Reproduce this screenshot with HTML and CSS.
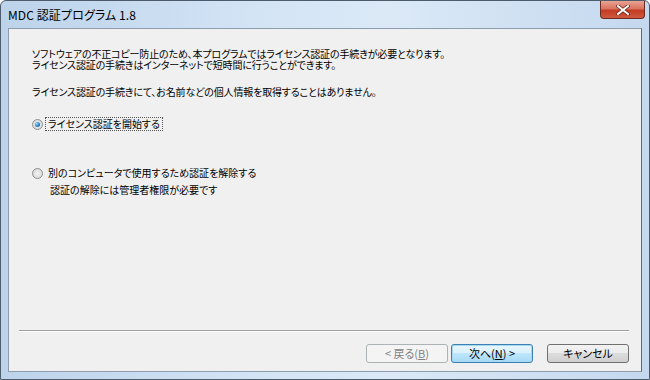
FILE: index.html
```html
<!DOCTYPE html>
<html lang="ja">
<head>
  <meta charset="UTF-8">
  <title>MDC 認証プログラム 1.8</title>
  <link rel="stylesheet" href="styles.css">
</head>
<body>
  <div class="window">
    <div class="titlebar">
      <span class="title">MDC 認証プログラム 1.8</span>
      <div class="close-btn">
        <svg width="14" height="10" viewBox="0 0 14 10">
          <path d="M2 1 L12 9 M12 1 L2 9" stroke="#5a1a10" stroke-width="3.4" stroke-linecap="square"/>
          <path d="M2 1 L12 9 M12 1 L2 9" stroke="#fff" stroke-width="2" stroke-linecap="square"/>
        </svg>
      </div>
    </div>

    <div class="client">
      <div class="content">
        <p class="intro">ソフトウェアの不正コピー防止のため、本プログラムではライセンス認証の手続きが必要となります。<br>ライセンス認証の手続きはインターネットで短時間に行うことができます。</p>
        <p class="intro last">ライセンス認証の手続きにて、お名前などの個人情報を取得することはありません。</p>

        <div class="option first">
          <span class="radio checked"></span>
          <span class="label focus">ライセンス認証を開始する</span>
        </div>

        <div class="option second">
          <span class="radio"></span>
          <span class="label">別のコンピュータで使用するため認証を解除する</span>
        </div>
        <p class="note">認証の解除には管理者権限が必要です</p>
      </div>

      <div class="separator"></div>

      <div class="buttons">
        <button class="btn disabled" disabled>&lt; 戻る(<u>B</u>)</button>
        <button class="btn default">次へ(<u>N</u>) &gt;</button>
        <button class="btn cancel">キャンセル</button>
      </div>
    </div>
  </div>
</body>
</html>
```

FILE: styles.css
```css
body {
  margin: 0;
  padding: 0;
  font-family: "Noto Sans CJK JP", "Liberation Sans", sans-serif;
  font-feature-settings: "palt";
  color: #000;
  background: #fff;
}

.window {
  width: 650px;
  height: 380px;
  box-sizing: border-box;
  border: 1px solid #4d5c6c;
  border-radius: 6px 6px 0 0;
  background: linear-gradient(to right, #bdd3ea 0%, #d3e4f5 40%, #dbe9f7 60%, #c4d8ee 100%);
  padding: 0 7px 7px 7px;
  display: flex;
  flex-direction: column;
}

.titlebar {
  height: 27px;
  display: flex;
  align-items: flex-start;
  justify-content: space-between;
  flex-shrink: 0;
}

.title {
  font-size: 12px;
  line-height: 12px;
  margin-top: 8px;
  color: #000;
  letter-spacing: 0.1px;
}

.close-btn {
  width: 45px;
  height: 18px;
  margin-right: -3px;
  box-sizing: border-box;
  border: 1px solid #6b2b22;
  border-top: none;
  border-radius: 0 0 4px 4px;
  background: linear-gradient(to bottom, #e8a394 0%, #d9745f 45%, #c23b22 55%, #cf5a3e 100%);
  display: flex;
  align-items: center;
  justify-content: center;
}

.client {
  flex: 1;
  background: #f0f0f0;
  border: 1px solid #8c9cad;
  border-right-color: #5f6b78;
  display: flex;
  flex-direction: column;
}

.content {
  flex: 1;
  padding: 19px 0 0 23px;
  font-size: 10px;
}

.intro {
  margin: 0 0 16px 0;
  line-height: 11px;
  letter-spacing: -0.15px;
}

.intro.last {
  margin-bottom: 0;
}

.option {
  display: flex;
  align-items: center;
}

.option.first {
  margin-top: 20px;
}

.option.second {
  margin-top: 35px;
}

.radio {
  width: 11px;
  height: 11px;
  box-sizing: border-box;
  border-radius: 50%;
  border: 1px solid #8f8f8f;
  background: radial-gradient(circle, #f4f4f4 0%, #dcdcdc 70%, #cfcfcf 100%);
  display: inline-flex;
  align-items: center;
  justify-content: center;
  margin-right: 2px;
}

.radio.checked::after {
  content: "";
  width: 5px;
  height: 5px;
  border-radius: 50%;
  background: radial-gradient(circle at 35% 35%, #a9e3ff 0%, #2e8fd3 45%, #0d4f8e 100%);
}

.label {
  padding: 0 2px;
  line-height: 12px;
  border: 1px dotted transparent;
}

.label.focus {
  border-color: #555;
}

.note {
  margin: 4px 0 0 18px;
  line-height: 12px;
}

.separator {
  margin: 0 12px 0 10px;
  border-top: 1px solid #a0a0a0;
  border-bottom: 1px solid #fff;
}

.buttons {
  display: flex;
  justify-content: flex-end;
  gap: 3px;
  padding: 12px 12px 8px 0;
}

.btn {
  width: 82px;
  height: 19px;
  padding: 0;
  font-family: "Noto Sans CJK JP", "Liberation Sans", sans-serif;
  font-feature-settings: "palt";
  font-size: 11px;
  line-height: 15px;
  border: 1px solid #707070;
  border-radius: 3px;
  background: linear-gradient(to bottom, #f2f2f2 0%, #ebebeb 49%, #dddddd 50%, #cfcfcf 100%);
  color: #000;
}

.btn u {
  text-underline-offset: 1px;
}

.btn.disabled {
  border-color: #adb2b5;
  background: #f4f4f4;
  color: #838383;
}

.btn.default {
  border-color: #3c7fb1;
  box-shadow: inset 0 0 0 1px #a6daf3;
  background: linear-gradient(to bottom, #eaf6fd 0%, #d9f0fc 49%, #bee6fd 50%, #a7d9f5 100%);
}

.btn.cancel {
  margin-left: 11px;
}
```
